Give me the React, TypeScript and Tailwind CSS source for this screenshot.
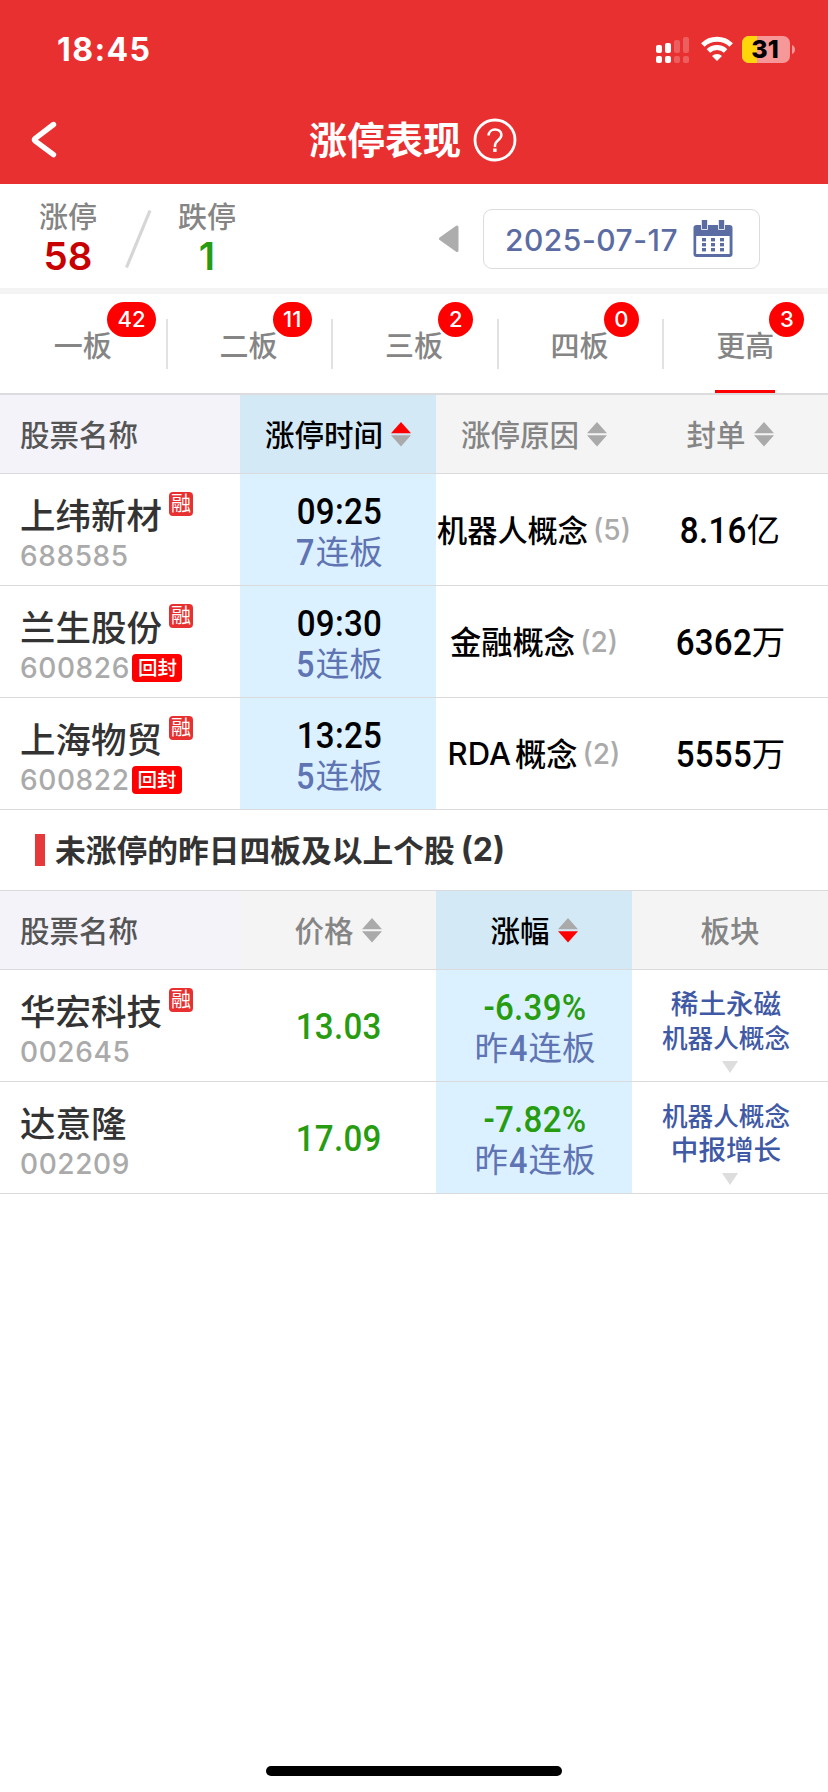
import React from "react";

const CJK = "font-['Noto_Sans_CJK_SC',sans-serif]";
const INTER = "font-['Inter','Noto_Sans_CJK_SC',sans-serif]";
const DIN = "font-['Roboto','Noto_Sans_CJK_SC',sans-serif]";

type SortState = "none" | "up" | "down";

function SortIcon({ state }: { state: SortState }) {
  return (
    <svg width="20" height="25" viewBox="0 0 20 25" className="shrink-0">
      <path d="M10 0 L20 11.2 H0 Z" fill={state === "up" ? "#ff0000" : "#aaaaaa"} />
      <path d="M10 24.4 L20 13.2 H0 Z" fill={state === "down" ? "#ff0000" : "#aaaaaa"} />
    </svg>
  );
}

function StatusBar() {
  return (
    <div className="flex h-[98px] items-start justify-between pr-[33px] pl-[57px]">
      <div className={`${INTER} pt-[34px] text-[32px] leading-[32px] font-bold tracking-[1.4px] text-white`}>18:45</div>
      <div className="flex pt-[36px]">
        <svg width="34" height="28" viewBox="0 0 34 28" className="mr-[11px]">
          <g fill="#fff">
            <rect x="0" y="9" width="6" height="8" rx="2" />
            <rect x="9" y="7" width="6" height="10" rx="2" />
            <rect x="0" y="20" width="6" height="7" rx="2" />
            <rect x="9" y="20" width="6" height="7" rx="2" />
          </g>
          <g fill="#fff" opacity="0.22">
            <rect x="18" y="4" width="6" height="13" rx="2" />
            <rect x="27" y="1" width="6" height="16" rx="2" />
            <rect x="18" y="20" width="6" height="7" rx="2" />
            <rect x="27" y="20" width="6" height="7" rx="2" />
          </g>
        </svg>
        <svg width="32" height="26" viewBox="0 0 32 26" className="mr-[9px]">
          <g fill="none" stroke="#fff" strokeWidth="5">
            <path d="M1.8 9 A20.4 20.4 0 0 1 30.2 9" />
            <path d="M7.4 15 A12.4 12.4 0 0 1 24.6 15" />
          </g>
          <path d="M16 25 L11 20 A7 7 0 0 1 21 20 Z" fill="#fff" />
        </svg>
        <div className="relative flex h-[27px] w-[48px] justify-center">
          <div className="absolute inset-0 overflow-hidden rounded-[7px] bg-[#f69898]">
            <div className="h-full w-[15px] bg-[#ffd60a]" />
          </div>
          <span className={`${INTER} relative pr-[2px] text-[25px] leading-[27px] font-extrabold text-black`}>31</span>
        </div>
        <svg width="3" height="9" viewBox="0 0 3 9" className="mt-[9px] ml-[2px]">
          <path d="M0 0 Q3 1.5 3 4.5 T0 9 Z" fill="#f69898" />
        </svg>
      </div>
    </div>
  );
}

function NavBar() {
  return (
    <div className="flex h-[86px] items-center pl-[31px]">
      <svg width="27" height="38" viewBox="0 0 27 38" className="mt-[-2px]">
        <path d="M22.5 3.5 L4 17.6 Q3 18.7 4 19.8 L22.5 33.7" fill="none" stroke="#fff" strokeWidth="5.4" strokeLinecap="round" strokeLinejoin="round" />
      </svg>
      <div className="ml-[251px] flex items-center">
        <h1 className={`${CJK} mt-[-6px] text-[38px] leading-[50px] font-bold text-white`}>涨停表现</h1>
        <svg width="44" height="44" viewBox="0 0 44 44" className="mt-[-3px] ml-[12px]">
          <g fill="none" stroke="#fff" strokeWidth="2.8">
            <circle cx="22" cy="22" r="20" />
            <path d="M15.6 17.6 C15.6 9.6 28.4 9.6 28.4 17 C28.4 22 22 22.4 22 27 V29" strokeWidth="2.5" />
          </g>
          <rect x="20.2" y="30.5" width="3.4" height="3.4" fill="#fff" />
        </svg>
      </div>
    </div>
  );
}

function Summary() {
  return (
    <div className="flex h-[110px] items-start border-b-6 border-[#f3f3f3] bg-white">
      <div className="ml-[38px] flex w-[60px] flex-col items-center pt-[13px]">
        <span className={`${CJK} text-[29px] leading-[36px] font-medium text-[#858585]`}>涨停</span>
        <span className={`${INTER} mt-[3px] text-[38.5px] leading-[40px] font-semibold text-[#c80000]`}>58</span>
      </div>
      <svg width="30" height="60" viewBox="0 0 30 60" className="mt-[25px] ml-[25px]">
        <path d="M27 1.5 L3.5 58.5" stroke="#d6d6d6" strokeWidth="3.2" />
      </svg>
      <div className="ml-[24px] flex w-[60px] flex-col items-center pt-[13px]">
        <span className={`${CJK} text-[29px] leading-[36px] font-medium text-[#858585]`}>跌停</span>
        <span className={`${INTER} mt-[3px] text-[38.5px] leading-[40px] font-semibold text-[#279c11]`}>1</span>
      </div>
      <svg width="22" height="28" viewBox="0 0 22 28" className="mt-[41px] ml-[201px]">
        <path d="M19 2 V25.5 L2.5 13.8 Z" fill="#adadad" stroke="#adadad" strokeWidth="3" strokeLinejoin="round" />
      </svg>
      <div className="mt-[25px] ml-[23px] flex h-[60px] w-[277px] rounded-[9px] border border-[#dcdcdc]">
        <span className={`${INTER} ml-[21px] w-[188px] text-[30px] leading-[60px] font-medium tracking-[0.5px] whitespace-nowrap text-[#5b6ca3]`}>2025-07-17</span>
        <svg width="40" height="38" viewBox="0 0 40 38" className="mt-[10px]">
          <rect x="0.5" y="5" width="39" height="32" rx="3" fill="#5b6ca3" />
          <rect x="3.2" y="16" width="33.4" height="18" fill="#fff" />
          <path d="M8.5 0 V9.5 H14.5 V0 M25.5 0 V9.5 H31.5 V0" fill="#5b6ca3" stroke="#dfe3ef" strokeWidth="1" />
          <g fill="#5b6ca3">
            {[18, 23, 28].map((y) => [9, 18, 27].map((x) => <rect key={`${x}-${y}`} x={x} y={y} width="4" height="3.4" />))}
          </g>
        </svg>
      </div>
    </div>
  );
}

const TABS = [
  { label: "一板", count: "42" },
  { label: "二板", count: "11" },
  { label: "三板", count: "2" },
  { label: "四板", count: "0" },
  { label: "更高", count: "3", active: true },
];

function Tabs() {
  return (
    <div className="grid h-[101px] grid-cols-5 border-b-2 border-[#dcdcde] bg-white">
      {TABS.map((tab, i) => (
        <div key={tab.label} className="relative flex justify-center">
          <span className={`${CJK} pt-[30px] text-[29px] leading-[40px] font-medium text-[#858585]`}>{tab.label}</span>
          <span className={`${INTER} absolute top-[8px] left-[107px] flex h-[35px] min-w-[35px] items-center justify-center rounded-full bg-[#ff0000] px-[10.5px] text-[22px] leading-[35px] font-medium text-white`}>
            {tab.count}
          </span>
          {i < 4 && <span className="absolute top-[25px] right-[-2px] h-[50px] w-[2px] bg-[#e2e2e2]" />}
          {tab.active && <span className="absolute bottom-0 h-[3px] w-[60px] bg-[#ff0000]" />}
        </div>
      ))}
    </div>
  );
}

const GRID = "grid grid-cols-[240px_196px_196px_196px]";

function HeadCell({ label, sort, active }: { label: string; sort?: SortState; active?: boolean }) {
  return (
    <div className={`flex items-center justify-center ${active ? "bg-[#d4e9f6]" : "bg-[#f4f4f4]"}`}>
      <span className={`${CJK} mt-[-2px] text-[29.5px] leading-[40px] font-medium ${active ? "text-black" : "text-[#858585]"}`}>{label}</span>
      {sort && (
        <span className="ml-[8px]">
          <SortIcon state={sort} />
        </span>
      )}
    </div>
  );
}

function NameHead() {
  return (
    <div className="flex items-center bg-[#f4f3fa] pl-[20px]">
      <span className={`${CJK} mt-[-2px] text-[29.5px] leading-[40px] font-medium text-[#555555]`}>股票名称</span>
    </div>
  );
}

function NameCell({ name, code, margin, resealed }: { name: string; code: string; margin?: boolean; resealed?: boolean }) {
  return (
    <div className="pl-[20px]">
      <div className="flex h-[64px]">
        <span className={`${CJK} pt-[18px] text-[35.5px] leading-[44px] font-medium text-[#333333]`}>{name}</span>
        {margin && (
          <span className={`${CJK} mt-[18px] ml-[7px] flex h-[24px] w-[24px] items-center justify-center rounded-[4px] bg-[#e93030] pb-[2px] text-[20px] leading-[22px] text-white`}>融</span>
        )}
      </div>
      <div className="flex h-[36px] items-center">
        <span className={`${INTER} text-[28px] leading-[36px] font-medium tracking-[0.6px] text-[#aaaaaa]`}>{code}</span>
        {resealed && (
          <span className={`${CJK} ml-[2.5px] flex h-[28px] w-[50px] items-center justify-center rounded-[4px] bg-[#ff0000] pb-[2px] text-[19.5px] leading-[26px] font-medium text-white`}>回封</span>
        )}
      </div>
    </div>
  );
}

function StackCell({ top, prefix, num, green }: { top: string; prefix?: string; num: string; green?: boolean }) {
  return (
    <div className={`${DIN} flex flex-col items-center bg-[#dcf1ff] pt-[18px] pl-[2px]`}>
      <span className={`scale-x-[0.92] text-[36px] leading-[40px] font-medium tracking-[0.3px] ${green ? "text-[#279c11]" : "text-black"}`}>{top}</span>
      <span className="mt-[1px] flex text-[33.5px] leading-[40px] text-[#5f74b3]">
        {prefix && <span>{prefix}</span>}
        <span className="scale-x-[0.9] text-[36px] font-medium">{num}</span>
        <span>连板</span>
      </span>
    </div>
  );
}

const LIMIT_UP = [
  { name: "上纬新材", code: "688585", resealed: false, time: "09:25", num: "7", latin: "", reason: "机器人概念", n: 5, amount: "8.16", unit: "亿" },
  { name: "兰生股份", code: "600826", resealed: true, time: "09:30", num: "5", latin: "", reason: "金融概念", n: 2, amount: "6362", unit: "万" },
  { name: "上海物贸", code: "600822", resealed: true, time: "13:25", num: "5", latin: "RDA", reason: "概念", n: 2, amount: "5555", unit: "万" },
];

const MISSED = [
  { name: "华宏科技", code: "002645", margin: true, price: "13.03", pct: "-6.39%", plates: ["稀土永磁", "机器人概念"] },
  { name: "达意隆", code: "002209", margin: false, price: "17.09", pct: "-7.82%", plates: ["机器人概念", "中报增长"] },
];

export default function App() {
  return (
    <div className="flex h-[1792px] w-[828px] flex-col overflow-hidden bg-white">
      <header className="h-[184px] bg-[#e93030]">
        <StatusBar />
        <NavBar />
      </header>
      <Summary />
      <Tabs />

      <div className={`${GRID} h-[79px] border-b border-[#dadadc]`}>
        <NameHead />
        <HeadCell label="涨停时间" sort="up" active />
        <HeadCell label="涨停原因" sort="none" />
        <HeadCell label="封单" sort="none" />
      </div>
      {LIMIT_UP.map((s) => (
        <div key={s.code} className={`${GRID} h-[112px] border-b border-[#dadadc]`}>
          <NameCell name={s.name} code={s.code} margin resealed={s.resealed} />
          <StackCell top={s.time} num={s.num} />
          <div className="flex items-center justify-center whitespace-nowrap">
            {s.latin && <span className={`${INTER} mr-[4px] text-[31px] leading-[40px] font-medium text-black`}>{s.latin}</span>}
            <span className={`${CJK} mt-[-2px] leading-[40px] font-medium text-black ${s.reason.length > 4 ? "text-[30.2px]" : "text-[31.3px]"}`}>{s.reason}</span>
            <span className={`${INTER} ml-[5px] text-[28px] leading-[40px] font-medium text-[#aaaaaa]`}>({s.n})</span>
          </div>
          <div className={`${DIN} flex items-center justify-center pt-[2px] pr-[6px] leading-[40px] text-black`}>
            <span className="origin-right scale-x-[0.92] text-[36px] font-medium tracking-[0.3px]">{s.amount}</span>
            <span className="text-[33.5px]">{s.unit}</span>
          </div>
        </div>
      ))}

      <div className="flex h-[81px] items-center border-b border-[#dadadc] pl-[35px]">
        <span className="h-[32px] w-[10px] bg-[#e6393c]" />
        <span className={`${CJK} mt-[-2px] ml-[10px] text-[30.75px] leading-[40px] font-bold text-[#333333]`}>未涨停的昨日四板及以上个股</span>
        <span className={`${INTER} ml-[6px] text-[32px] leading-[40px] font-bold text-[#333333]`}>(2)</span>
      </div>

      <div className={`${GRID} h-[79px] border-b border-[#dadadc]`}>
        <NameHead />
        <HeadCell label="价格" sort="none" />
        <HeadCell label="涨幅" sort="down" active />
        <HeadCell label="板块" />
      </div>
      {MISSED.map((s) => (
        <div key={s.code} className={`${GRID} h-[112px] border-b border-[#dadadc]`}>
          <NameCell name={s.name} code={s.code} margin={s.margin} />
          <div className={`${DIN} flex items-center justify-center pt-[2px] pl-[2px] text-[36px] leading-[40px] font-medium tracking-[0.3px] text-[#279c11]`}>
            <span className="scale-x-[0.92]">{s.price}</span>
          </div>
          <StackCell top={s.pct} prefix="昨" num="4" green />
          <div className="flex flex-col items-center pt-[16px] pr-[8px]">
            {s.plates.map((p) => (
              <span key={p} className={`${CJK} leading-[33.5px] font-medium text-[#4059a5] ${p.length > 4 ? "text-[25.6px]" : "text-[27.6px]"}`}>{p}</span>
            ))}
            <svg width="16" height="12" viewBox="0 0 16 12" className="mt-[8px] ml-[7px]">
              <path d="M0 0 H16 L8 12 Z" fill="#dddddd" />
            </svg>
          </div>
        </div>
      ))}

      <div className="mt-auto mb-[16px] h-[10px] w-[296px] self-center rounded-full bg-black" />
    </div>
  );
}
